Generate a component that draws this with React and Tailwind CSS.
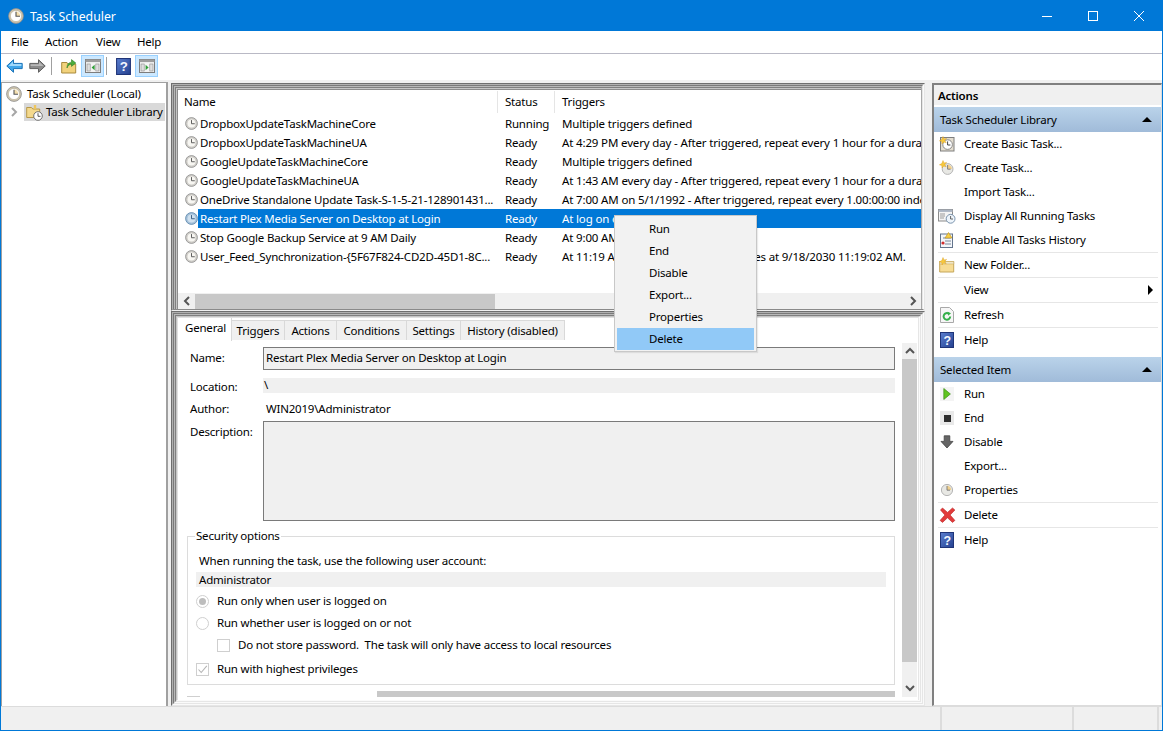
import React from "react";

const Clock = ({ s = 14, sel = false }) => (
  <svg width={s} height={s} viewBox="0 0 16 16" className="shrink-0 block">
    <circle cx="8" cy="8" r="7.3" fill={sel ? "#a3bfd8" : "#cfcdc8"} stroke={sel ? "#5d87ad" : "#8f8f8f"} strokeWidth="1" />
    <circle cx="8" cy="8" r="4.9" fill={sel ? "#cfe0ee" : "#f7f6f2"} />
    <path d="M8 3.8V8.3H12" fill="none" stroke={sel ? "#3c5f82" : "#5c5c5c"} strokeWidth="1.2" />
  </svg>
);
const AppClock = () => (
  <svg width="16" height="16" viewBox="0 0 16 16" className="shrink-0 block">
    <circle cx="8" cy="8" r="7.4" fill="#cfc6b0" stroke="#8d8d8d" strokeWidth="0.8" />
    <circle cx="8" cy="8" r="5.6" fill="#fff" stroke="#b9ae92" strokeWidth="0.6" />
    <path d="M8 8V3.6A4.4 4.4 0 0 1 12.4 8Z" fill="#f4dfae" />
    <path d="M8 3.8V8.3H12" fill="none" stroke="#555" strokeWidth="1.1" />
  </svg>
);
const Help = ({ s = 16 }) => (
  <svg width={s} height={s} viewBox="0 0 16 16" className="shrink-0 block">
    <defs>
      <linearGradient id="helpg" x1="0" y1="0" x2="1" y2="1">
        <stop offset="0" stopColor="#5b7fd0" />
        <stop offset="1" stopColor="#24408f" />
      </linearGradient>
    </defs>
    <rect x="1.5" y="0.5" width="13" height="15" fill="url(#helpg)" stroke="#1f3478" />
    <text x="8.3" y="12.5" fontSize="12.5" fontWeight="700" fill="#f4f7ff" textAnchor="middle" fontFamily="Liberation Sans, sans-serif">?</text>
  </svg>
);
const ArrowBack = () => (
  <svg width="17" height="14" viewBox="0 0 17 14" className="block">
    <path d="M7.5 0.7 0.8 7l6.7 6.3V9.6h8.7V4.4H7.5Z" fill="#3fa5ea" stroke="#1a73b8" strokeWidth="1" />
    <path d="M7 2.6 2.6 7H15.4V5H7Z" fill="#9fd8fb" />
  </svg>
);
const ArrowFwd = () => (
  <svg width="17" height="14" viewBox="0 0 17 14" className="block">
    <path d="M9.5 0.7 16.2 7l-6.7 6.3V9.6H0.8V4.4h8.7Z" fill="#8b8b8b" stroke="#5f5f5f" strokeWidth="1" />
    <path d="M1.6 5.2H10V2.7L14.5 7H1.6Z" fill="#b7b7b7" />
  </svg>
);
const FolderUp = () => (
  <svg width="16" height="16" viewBox="0 0 16 16" className="block">
    <path d="M0.7 4.5H6L7 6H14.7V15H0.7Z" fill="#f2d27c" stroke="#a98a3d" />
    <path d="M6 10C6 6 8 4.5 10.5 4.2V1.6L14.8 5 10.5 8.4V6C8.5 6.2 7 7.5 6 10Z" fill="#4cae3d" stroke="#2d7f26" strokeWidth="0.6" />
  </svg>
);
const PanelIcon = ({ right }) => (
  <svg width="16" height="14" viewBox="0 0 16 14" className="block">
    <rect x="0.5" y="0.5" width="15" height="13" fill="#f4f4f4" stroke="#7d7d7d" />
    <rect x="0.5" y="0.5" width="15" height="2.6" fill="#9d9d9d" />
    <rect x="2" y="5" width="3.2" height="7" fill="#dfdfdf" stroke="#8d8d8d" strokeWidth="0.6" />
    <rect x="10.8" y="5" width="3.2" height="7" fill="#dfdfdf" stroke="#8d8d8d" strokeWidth="0.6" />
    {right ? <path d="M6.6 5.8 9.6 8.5 6.6 11.2Z" fill="#2f9e37" /> : <path d="M9.6 5.8 6.6 8.5 9.6 11.2Z" fill="#2f9e37" />}
  </svg>
);
const FolderClock = () => (
  <svg width="17" height="17" viewBox="0 0 17 17" className="block">
    <path d="M0.7 3.5H5.5L6.8 5H13.7V13.5H0.7Z" fill="#f4d98d" stroke="#b8994a" />
    <path d="M9 1V5" stroke="#efc65b" strokeWidth="2.4" />
    <circle cx="12" cy="12" r="4.3" fill="#fff" stroke="#737373" />
    <path d="M12 9.2V12.3H14.5" fill="none" stroke="#444" strokeWidth="0.9" />
  </svg>
);
const Star = () => <path d="M4 0.5 5 3 7.6 2.4 5.8 4.4 7.2 6.8 4.6 6 3 8 2.8 5.6 0.4 4.8 2.8 3.6Z" fill="#f7c93e" stroke="#d99a1c" strokeWidth="0.4" />;
const BasicTask = () => (
  <svg width="16" height="16" viewBox="0 0 16 16" className="block">
    <rect x="1.5" y="1.5" width="13.5" height="13.5" fill="#e3ddd0" stroke="#7e7e7e" />
    <circle cx="8.6" cy="8.6" r="4.8" fill="#fff" stroke="#8a8a8a" />
    <path d="M8.6 5.4V9H11.4" fill="none" stroke="#444" strokeWidth="1" />
    <Star />
  </svg>
);
const CreateTask = () => (
  <svg width="16" height="16" viewBox="0 0 16 16" className="block">
    <circle cx="8.6" cy="9" r="5.4" fill="#e8e8e4" stroke="#b5b5b5" />
    <path d="M8.6 9V4.8A4.2 4.2 0 0 1 12.8 9Z" fill="#f4d089" />
    <path d="M8.6 5V9.2H11.6" fill="none" stroke="#777" strokeWidth="0.9" />
    <Star />
  </svg>
);
const Props = () => (
  <svg width="14" height="14" viewBox="0 0 14 14" className="block">
    <circle cx="7" cy="7" r="5.6" fill="#e8e8e4" stroke="#b5b5b5" />
    <path d="M7 7V2.8A4.2 4.2 0 0 1 11.2 7Z" fill="#f0d08e" />
    <path d="M7 3V7.2H10" fill="none" stroke="#777" strokeWidth="0.9" />
  </svg>
);
const Running = () => (
  <svg width="18" height="16" viewBox="0 0 18 16" className="block">
    <rect x="0.5" y="1.5" width="14" height="11.5" fill="#f4f4f4" stroke="#8b8b8b" />
    <rect x="0.5" y="1.5" width="14" height="2.4" fill="#aab4c2" />
    <path d="M2 6H7M2 8H7M2 10H6" stroke="#9b9b9b" />
    <circle cx="12.6" cy="10.8" r="4.4" fill="#eef5fb" stroke="#7a93ad" />
    <path d="M12.6 8V11H15" fill="none" stroke="#555" strokeWidth="0.9" />
  </svg>
);
const History = () => (
  <svg width="16" height="16" viewBox="0 0 16 16" className="block">
    <rect x="1.5" y="2" width="12" height="13.5" fill="#f3f6fa" stroke="#63748c" />
    <path d="M4 6H12M6 9H12M6 12H12" stroke="#7a8798" />
    <circle cx="4" cy="11" r="1.6" fill="#d22c2c" />
    <path d="M9.5 0.5 13 6H6Z" fill="#f5cf48" stroke="#bc8d1a" strokeWidth="0.6" />
  </svg>
);
const NewFolder = () => (
  <svg width="16" height="16" viewBox="0 0 16 16" className="block">
    <path d="M0.7 4.5H14.7V15H0.7Z" fill="#f7dc94" stroke="#c5a75a" />
    <path d="M0.7 4.5H14.7V7H0.7Z" fill="#f0e6c8" stroke="#c5a75a" strokeWidth="0.5" />
    <Star />
  </svg>
);
const Refresh = () => (
  <svg width="14" height="16" viewBox="0 0 14 16" className="block">
    <path d="M0.5 0.5H9.5L13.5 4.5V15.5H0.5Z" fill="#f6f6f6" stroke="#a8a8a8" />
    <path d="M10.2 9.5A3.3 3.3 0 1 1 8.8 6.7" fill="none" stroke="#35b04a" strokeWidth="2" />
    <path d="M7.6 4.8 11 6.2 8.2 8.8Z" fill="#35b04a" />
  </svg>
);
const Play = () => (
  <div className="w-[14px] h-[14px] bg-[#f4f4f4] flex items-center justify-center">
    <svg width="8" height="12" viewBox="0 0 8 12" className="block"><path d="M0.8 0.5 7.4 6 0.8 11.5Z" fill="#5fc41f" stroke="#3a8e14" strokeWidth="0.7" /></svg>
  </div>
);
const Stop = () => (
  <div className="w-[14px] h-[14px] bg-[#e9e9e9] flex items-center justify-center">
    <div className="w-[7px] h-[7px] bg-[#2e2e2e]" />
  </div>
);
const Down = () => (
  <svg width="14" height="14" viewBox="0 0 14 14" className="block">
    <path d="M4.2 0.8H9.8V6.4H13L7 13 1 6.4H4.2Z" fill="#666" stroke="#444" strokeWidth="0.8" />
  </svg>
);
const RedX = () => (
  <svg width="17" height="16" viewBox="0 0 16 16" className="block">
    <path d="M1 3 3 1 8 5.4 13 1 15.4 3 10.6 8 15.4 13.4 13 15.4 8 10.8 3 15.4 0.6 13.4 5.4 8Z" fill="#e23b3b" stroke="#b92424" strokeWidth="0.6" />
  </svg>
);
const ChevL = () => <svg width="8" height="10" viewBox="0 0 8 10" className="block"><path d="M6 1 2 5l4 4" fill="none" stroke="#555" strokeWidth="2" /></svg>;
const ChevR = ({ c = "#555" }) => <svg width="8" height="10" viewBox="0 0 8 10" className="block"><path d="M2 1l4 4-4 4" fill="none" stroke={c} strokeWidth="2" /></svg>;
const ChevU = () => <svg width="10" height="8" viewBox="0 0 10 8" className="block"><path d="M1 6l4-4 4 4" fill="none" stroke="#555" strokeWidth="2" /></svg>;
const ChevD = () => <svg width="10" height="8" viewBox="0 0 10 8" className="block"><path d="M1 2l4 4 4-4" fill="none" stroke="#555" strokeWidth="2" /></svg>;

const tasks = [
  ["DropboxUpdateTaskMachineCore", "Running", "Multiple triggers defined"],
  ["DropboxUpdateTaskMachineUA", "Ready", "At 4:29 PM every day - After triggered, repeat every 1 hour for a duration of 1 day."],
  ["GoogleUpdateTaskMachineCore", "Ready", "Multiple triggers defined"],
  ["GoogleUpdateTaskMachineUA", "Ready", "At 1:43 AM every day - After triggered, repeat every 1 hour for a duration of 1 day."],
  ["OneDrive Standalone Update Task-S-1-5-21-128901431...", "Ready", "At 7:00 AM on 5/1/1992 - After triggered, repeat every 1.00:00:00 indefinitely."],
  ["Restart Plex Media Server on Desktop at Login", "Ready", "At log on of WIN2019\\Administrator"],
  ["Stop Google Backup Service at 9 AM Daily", "Ready", "At 9:00 AM every day"],
  ["User_Feed_Synchronization-{5F67F824-CD2D-45D1-8C...", "Ready", "At 11:19 AM every day - Trigger expires at 9/18/2030 11:19:02 AM."],
];

const listLevels = [
  "border-l border-t border-r border-b border-l-[#6e6e6e] border-t-[#6e6e6e] border-r-[#e6e6e6] border-b-[#f0f0f0]",
  "border-l border-t border-r border-b border-l-[#b0b0b0] border-t-[#b0b0b0] border-r-[#fafafa] border-b-[#8a8a8a]",
  "border-l border-t border-r border-l-[#7a7a7a] border-t-[#7a7a7a] border-r-[#e6e6e6]",
  "border-l border-t border-r border-l-[#b8b8b8] border-t-[#b8b8b8] border-r-[#a8a8a8]",
  "border-l border-t border-l-[#7f7f7f] border-t-[#7f7f7f]",
  "border-l border-t border-l-[#c4c4c4] border-t-[#c4c4c4]",
  "border-l border-t border-l-[#8c8c8c] border-t-[#8c8c8c]",
];
const detailLevels = [
  "border-l border-t border-r border-b border-l-[#6e6e6e] border-t-[#6e6e6e] border-r-[#e6e6e6] border-b-[#e6e6e6]",
  "border-l border-t border-r border-b border-l-[#b0b0b0] border-t-[#b0b0b0] border-r-[#fafafa] border-b-[#fafafa]",
  "border-l border-t border-r border-b border-l-[#7a7a7a] border-t-[#7a7a7a] border-r-[#e6e6e6] border-b-[#e6e6e6]",
  "border-l border-t border-r border-b border-l-[#b8b8b8] border-t-[#b8b8b8] border-r-[#fafafa] border-b-[#fafafa]",
  "border-l border-t border-r border-b border-l-[#7f7f7f] border-t-[#7f7f7f] border-r-[#e6e6e6] border-b-[#e6e6e6]",
  "border-l border-t border-r border-b border-l-[#c4c4c4] border-t-[#c4c4c4] border-r-[#fafafa] border-b-[#fafafa]",
  "border-l border-t border-r border-l-[#e0e0e0] border-t-[#e0e0e0] border-r-[#e6e6e6]",
];
const Stripes = ({ levels, className = "", children }) =>
  levels.reduceRight(
    (inner, cls, i) => (
      <div className={`${cls} flex flex-col min-h-0 min-w-0 ${i === 0 ? className : "flex-1"}`}>{inner}</div>
    ),
    children
  );

const tabs = [
  ["Triggers", "w-[53px]"],
  ["Actions", "w-[52px]"],
  ["Conditions", "w-[70px]"],
  ["Settings", "w-[54px]"],
  ["History (disabled)", "w-[104px]"],
];

const ActionRow = ({ icon, label, sep, arrow }) => (
  <div className={`ml-[4px] mr-[3px] h-[24px] flex items-center ${sep ? "box-content border-t border-[#e6e6e6]" : ""}`}>
    <div className="w-[26px] shrink-0"><div className="w-[18px] flex justify-center">{icon}</div></div>
    <span className="flex-1 whitespace-nowrap">{label}</span>
    {arrow && <span className="mr-[5px] w-0 h-0 border-y-[5px] border-y-transparent border-l-[5px] border-l-black" />}
  </div>
);
const SectionHead = ({ label }) => (
  <div className="h-[25px] flex items-center justify-between px-[6px] bg-gradient-to-b from-[#bad3ea] to-[#a0bbd9]">
    <span>{label}</span>
    <span className="mr-[3px] w-0 h-0 border-x-[5px] border-x-transparent border-b-[5px] border-b-black" />
  </div>
);

export default function App() {
  return (
    <div className="relative w-[1163px] h-[731px] overflow-hidden flex flex-col border border-t-0 border-[#0078d7] bg-[#f0f0f0] text-black text-[11.5px] leading-[16px] tracking-[-0.2px] font-['Noto_Sans',sans-serif]">
      {/* Title bar */}
      <div className="h-[31px] shrink-0 bg-[#0078d7] flex items-center text-white pt-px">
        <div className="ml-[7px] mr-[6px]"><AppClock /></div>
        <span className="mt-[2px] text-[12.3px] tracking-normal">Task Scheduler</span>
        <div className="ml-auto flex items-center">
          <div className="w-[46px] flex justify-center"><div className="w-[10px] h-px bg-white" /></div>
          <div className="w-[46px] flex justify-center"><div className="w-[10px] h-[10px] border border-white" /></div>
          <div className="w-[46px] flex justify-center">
            <svg width="10" height="10" viewBox="0 0 10 10" className="block"><path d="M0 0l10 10M10 0 0 10" stroke="#fff" strokeWidth="1" /></svg>
          </div>
        </div>
      </div>
      {/* Menu */}
      <div className="h-[22px] shrink-0 bg-white flex items-center pl-[10px]">
        <span className="w-[34px]">File</span>
        <span className="w-[51px]">Action</span>
        <span className="w-[41px]">View</span>
        <span>Help</span>
      </div>
      {/* Toolbar */}
      <div className="h-[27px] shrink-0 bg-white border-t border-[#b9b9c5] flex items-center pl-[5px] pb-[2px]">
        <ArrowBack />
        <div className="ml-[6px]"><ArrowFwd /></div>
        <div className="ml-[5px] w-px h-[18px] bg-[#a0a0a0]" />
        <div className="ml-[9px]"><FolderUp /></div>
        <div className="ml-[4px] w-[23px] h-[22px] bg-[#cce8ff] border border-[#99d1ff] flex items-center justify-center"><PanelIcon /></div>
        <div className="ml-[2px] w-px h-[18px] bg-[#a0a0a0]" />
        <div className="ml-[8px]"><Help s={17} /></div>
        <div className="ml-[3px] w-[23px] h-[22px] bg-[#cce8ff] border border-[#99d1ff] flex items-center justify-center"><PanelIcon right /></div>
      </div>
      {/* Main */}
      <div className="flex-1 min-h-0 flex bg-[#f0f0f0] pt-[2px]">
        {/* Tree */}
        <div className="w-[167px] shrink-0 bg-white border-t border-l border-r-2 border-t-[#a0a0a0] border-l-[#a0a0a0] border-r-[#a0a0a0] pt-[2px]">
          <div className="h-[18px] flex items-center pl-[4px] gap-[5px] whitespace-nowrap"><AppClock />Task Scheduler (Local)</div>
          <div className="h-[18px] flex items-center pl-[8px] whitespace-nowrap">
            <ChevR c="#a6a6a6" />
            <div className="ml-[6px] flex-1 h-[18px] mr-[1px] bg-[#d9d9d9] flex items-center pl-[2px] gap-[3px]"><FolderClock />Task Scheduler Library</div>
          </div>
        </div>
        {/* Center */}
        <div className="ml-[3px] w-[754px] shrink-0 flex flex-col pt-px">
          <Stripes levels={listLevels} className="h-[228px] shrink-0">
            <div className="flex-1 min-h-0 bg-white flex flex-col overflow-hidden">
              <div className="h-[24px] shrink-0 flex items-center">
                <div className="w-[320px] pl-[6px] h-[22px] flex items-center border-r border-[#e5e5e5]">Name</div>
                <div className="w-[57px] pl-[7px] h-[22px] flex items-center border-r border-[#e5e5e5]">Status</div>
                <div className="pl-[7px]">Triggers</div>
              </div>
              {tasks.map(([name, status, trig], i) => {
                const sel = i === 5;
                return (
                  <div key={name} className="h-[19px] shrink-0 flex items-center whitespace-nowrap">
                    <div className="w-[20px] pl-[7px] shrink-0"><Clock s={13} sel={sel} /></div>
                    <div className={`flex-1 min-w-0 h-[19px] flex items-center ${sel ? "bg-[#0078d7] text-white" : ""}`}>
                      <div className="w-[300px] pl-[2px] shrink-0 overflow-hidden">{name}</div>
                      <div className="w-[57px] pl-[7px] shrink-0">{status}</div>
                      <div className="pl-[7px] flex-1 overflow-hidden tracking-[-0.15px]">{trig}</div>
                    </div>
                  </div>
                );
              })}
              <div className="flex-1" />
              <div className="h-[16px] shrink-0 bg-[#f0f0f0] flex items-center">
                <div className="w-[17px] flex justify-center"><ChevL /></div>
                <div className="w-[300px] h-[15px] bg-[#c8c8c8]" />
                <div className="flex-1" />
                <div className="w-[17px] flex justify-center"><ChevR /></div>
              </div>
            </div>
          </Stripes>
          <Stripes levels={detailLevels} className="flex-1">
            <div className="flex-1 min-h-0 bg-white flex flex-col overflow-hidden">
              <div className="h-[23px] shrink-0 flex items-end">
                <div className="w-[54px] h-[23px] pt-[2px] pl-[7px] bg-white border-r border-[#d9d9d9]">General</div>
                {tabs.map(([t, w]) => (
                  <div key={t} className={`${w} h-[20px] mb-[1px] bg-[#f0f0f0] border-t border-r border-[#d9d9d9] flex items-center justify-center whitespace-nowrap`}>{t}</div>
                ))}
              </div>
              <div className="flex-1 min-h-0 flex">
                <div className="w-[724px] shrink-0 flex flex-col">
                  <div className="mt-[6px] h-[23px] flex items-center">
                    <span className="w-[85px] pl-[12px] pb-px">Name:</span>
                    <div className="w-[632px] h-[23px] bg-[#f0f0f0] border border-[#7a7a7a] flex items-center pl-[2px] pb-px whitespace-nowrap">Restart Plex Media Server on Desktop at Login</div>
                  </div>
                  <div className="mt-[8px] h-[16px] flex">
                    <span className="w-[85px] pl-[12px] pt-px">Location:</span>
                    <div className="w-[632px] h-[15px] bg-[#f0f0f0] leading-[13px] pl-px">\</div>
                  </div>
                  <div className="mt-[7px] h-[16px] flex items-center">
                    <span className="w-[85px] pl-[12px]">Author:</span>
                    <span className="pl-[3px]">WIN2019\Administrator</span>
                  </div>
                  <div className="mt-[4px] h-[100px] flex">
                    <span className="w-[85px] pl-[12px] pt-[3px]">Description:</span>
                    <div className="w-[632px] h-[100px] bg-[#f0f0f0] border border-[#7a7a7a]" />
                  </div>
                  <div className="relative mt-[15px] ml-[9px] w-[708px] h-[149px] shrink-0 border border-[#dcdcdc] pl-[8px]">
                    <span className="absolute left-[7px] top-[-9px] bg-white px-px">Security options</span>
                    <div className="mt-[16px] pl-[3px] h-[16px]">When running the task, use the following user account:</div>
                    <div className="mt-[3px] w-[690px] h-[15px] bg-[#f0f0f0] pl-[3px] leading-[15px]">Administrator</div>
                    <div className="mt-[3px] h-[22px] flex items-center gap-[8px]">
                      <div className="w-[13px] h-[13px] rounded-full border border-[#cfcfcf] flex items-center justify-center"><div className="w-[7px] h-[7px] rounded-full bg-[#bdbdbd]" /></div>
                      Run only when user is logged on
                    </div>
                    <div className="h-[22px] flex items-center gap-[8px]">
                      <div className="w-[13px] h-[13px] rounded-full border border-[#cfcfcf]" />
                      Run whether user is logged on or not
                    </div>
                    <div className="h-[22px] flex items-center gap-[8px] pl-[21px] whitespace-pre">
                      <div className="w-[13px] h-[13px] border border-[#cfcfcf]" />
                      Do not store password.  The task will only have access to local resources
                    </div>
                    <div className="mt-[2px] h-[22px] flex items-center gap-[8px]">
                      <div className="w-[13px] h-[13px] border border-[#cfcfcf] flex items-center justify-center">
                        <svg width="11" height="11" viewBox="0 0 11 11" className="block"><path d="M1.5 5.5 4.2 8.5 9.8 1.8" fill="none" stroke="#b5b5b5" strokeWidth="1.1" /></svg>
                      </div>
                      Run with highest privileges
                    </div>
                  </div>
                  <div className="mt-[6px] ml-[9px] h-[6px] flex items-start">
                    <div className="w-[13px] h-[6px] border-b border-[#cfcfcf]" />
                    <div className="ml-[177px] w-[518px] h-[6px] bg-[#c8c8c8]" />
                  </div>
                </div>
                <div className="w-[15px] h-[354px] mt-[2px] shrink-0 bg-[#f0f0f0] flex flex-col">
                  <div className="h-[16px] flex items-center justify-center"><ChevU /></div>
                  <div className="h-[303px] bg-[#c8c8c8]" />
                  <div className="flex-1" />
                  <div className="h-[18px] flex items-center justify-center"><ChevD /></div>
                </div>
              </div>
            </div>
          </Stripes>
        </div>
        {/* Actions */}
        <div className="ml-[7px] flex-1 min-w-0 bg-white border-l-2 border-t-2 border-[#808080] mt-px border-r border-r-[#dcdcdc] border-b border-b-[#dcdcdc] flex flex-col">
          <div className="h-[20px] pt-px bg-[#f0f0f0] shrink-0 flex items-center pl-[4px] font-semibold">Actions</div>
          <div className="h-[2px]" />
          <SectionHead label="Task Scheduler Library" />
          <ActionRow icon={<BasicTask />} label="Create Basic Task..." />
          <ActionRow icon={<CreateTask />} label="Create Task..." />
          <ActionRow label="Import Task..." />
          <ActionRow icon={<Running />} label="Display All Running Tasks" />
          <ActionRow icon={<History />} label="Enable All Tasks History" />
          <ActionRow icon={<NewFolder />} label="New Folder..." sep />
          <ActionRow label="View" sep arrow />
          <ActionRow icon={<Refresh />} label="Refresh" sep />
          <ActionRow icon={<Help />} label="Help" sep />
          <div className="h-[5px]" />
          <SectionHead label="Selected Item" />
          <ActionRow icon={<Play />} label="Run" />
          <ActionRow icon={<Stop />} label="End" />
          <ActionRow icon={<Down />} label="Disable" />
          <ActionRow label="Export..." />
          <ActionRow icon={<Props />} label="Properties" />
          <ActionRow icon={<RedX />} label="Delete" sep />
          <ActionRow icon={<Help />} label="Help" sep />
        </div>
      </div>
      {/* Status bar */}
      <div className="h-[24px] shrink-0 bg-[#f0f0f0] border-t border-[#dcdcdc] flex">
        <div className="w-[941px] border-r-2 border-[#dcdcdc]" />
        <div className="w-[132px] border-r-2 border-[#dcdcdc]" />
        <div className="w-[85px] border-r-2 border-[#dcdcdc]" />
      </div>
      {/* Context menu */}
      <div className="absolute left-[613px] top-[215px] w-[143px] h-[137px] bg-[#f2f2f2] border border-[#c8c8c8] p-[2px] shadow-[1px_1px_1px_rgba(0,0,0,0.08)]">
        {["Run", "End", "Disable", "Export...", "Properties", "Delete"].map((m) => (
          <div key={m} className={`h-[22px] flex items-center pl-[32px] ${m === "Delete" ? "bg-[#91c9f7]" : ""}`}>{m}</div>
        ))}
      </div>
    </div>
  );
}
